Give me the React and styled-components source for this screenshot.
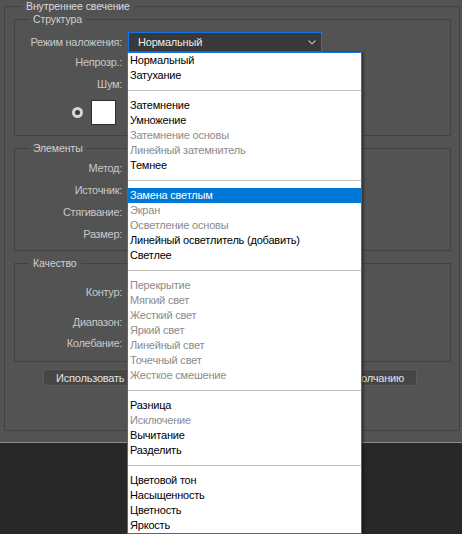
import React from 'react'
import styled, { createGlobalStyle } from 'styled-components'

const GlobalStyle = createGlobalStyle`
  html, body {
    margin: 0;
    padding: 0;
    background: #282828;
  }
  body {
    font-family: "Liberation Sans", Arial, sans-serif;
    font-size: 11px;
  }
`;

const blendGroups = [
  [['Нормальный'], ['Затухание']],
  [['Затемнение'], ['Умножение'], ['Затемнение основы', 'off'], ['Линейный затемнитель', 'off'], ['Темнее']],
  [['Замена светлым', 'sel'], ['Экран', 'off'], ['Осветление основы', 'off'], ['Линейный осветлитель (добавить)'], ['Светлее']],
  [['Перекрытие', 'off'], ['Мягкий свет', 'off'], ['Жесткий свет', 'off'], ['Яркий свет', 'off'], ['Линейный свет', 'off'], ['Точечный свет', 'off'], ['Жесткое смешение', 'off']],
  [['Разница'], ['Исключение', 'off'], ['Вычитание'], ['Разделить']],
  [['Цветовой тон'], ['Насыщенность'], ['Цветность'], ['Яркость']],
];

const App = () => {
  return (
    <Page>
      <GlobalStyle />
      <Panel>
        <Group $outer>
          <Legend $outer>Внутреннее свечение</Legend>

          <Group $top={1}>
            <Legend>Структура</Legend>
            <Rows $pt={7} $pb={10}>
              <Row $h={20}>
                <Label>Режим наложения:</Label>
                <SelectWrap>
                  <Select>
                    <span>Нормальный</span>
                    <svg width="8" height="5" viewBox="0 0 8 5">
                      <path d="M0.5 0.5 L4 4 L7.5 0.5" fill="none" stroke="#b4b4b4" strokeWidth="1.2" />
                    </svg>
                  </Select>
                  <Menu>
                    {blendGroups.map((group, gi) => (
                      <React.Fragment key={gi}>
                        {gi > 0 && <Separator />}
                        {group.map(([name, state]) => (
                          <MenuItem key={name} $off={state === 'off'} $sel={state === 'sel'}>
                            {name}
                          </MenuItem>
                        ))}
                      </React.Fragment>
                    ))}
                  </Menu>
                </SelectWrap>
              </Row>
              <Row $h={20}>
                <Label>Непрозр.:</Label>
              </Row>
              <Row $h={24}>
                <Label>Шум:</Label>
              </Row>
              <SwatchRow>
                <Radio />
                <Swatch />
              </SwatchRow>
            </Rows>
          </Group>

          <Group $top={6}>
            <Legend>Элементы</Legend>
            <Rows $pt={3} $pb={5}>
              <Row $h={22}><Label>Метод:</Label></Row>
              <Row $h={22}><Label>Источник:</Label></Row>
              <Row $h={22}><Label>Стягивание:</Label></Row>
              <Row $h={22}><Label>Размер:</Label></Row>
            </Rows>
          </Group>

          <Group $top={6}>
            <Legend>Качество</Legend>
            <Rows $pt={3} $pb={7}>
              <Row $h={40}><Label>Контур:</Label></Row>
              <Row $h={20}><Label>Диапазон:</Label></Row>
              <Row $h={22}><Label>Колебание:</Label></Row>
            </Rows>
          </Group>

          <Buttons>
            <Button $w={186}>Использовать по умолчанию</Button>
            <Button $w={182} $right>Восстановить по умолчанию</Button>
          </Buttons>
        </Group>
      </Panel>
      <Bottom />
    </Page>
  )
}

const Page = styled.div`
  width: 462px;
  height: 534px;
  display: flex;
  flex-direction: column;
  overflow: hidden;
`;

const Panel = styled.div`
  height: 443px;
  flex-shrink: 0;
  background: #535353;
  padding: 0 2px 0 4px;
  box-sizing: border-box;
  border-bottom: 1px solid #8c8c8c;
`;

const Bottom = styled.div`
  flex: 1;
  background: #282828;
`;

const Group = styled.fieldset`
  margin: ${p => (p.$outer ? '0' : `${p.$top}px 8px 0 9px`)};
  padding: ${p => (p.$outer ? '0 0 43px' : '0')};
  border: 1px solid #424242;
  min-width: 0;
  ${p => p.$outer && 'height: 431px; box-sizing: border-box;'}
`;

const Legend = styled.legend`
  margin-left: ${p => (p.$outer ? '17px' : '14px')};
  padding: 0 4px;
  line-height: 12px;
  font-size: 10.5px;
  letter-spacing: -0.1px;
  color: ${p => (p.$outer ? '#dadada' : '#d0d0d0')};
`;

const Rows = styled.div`
  display: flex;
  flex-direction: column;
  padding-top: ${p => p.$pt}px;
  padding-bottom: ${p => p.$pb}px;
`;

const Row = styled.div`
  display: flex;
  align-items: center;
  gap: 6px;
  height: ${p => p.$h}px;
`;

const Label = styled.div`
  width: 107px;
  text-align: right;
  color: #c8c8c8;
  letter-spacing: -0.3px;
  white-space: nowrap;
  flex-shrink: 0;
`;

const SelectWrap = styled.div`
  position: relative;
  width: 194px;
  height: 20px;
`;

const Select = styled.div`
  height: 100%;
  box-sizing: border-box;
  background: #393939;
  border: 1px solid #1473e6;
  display: flex;
  align-items: center;
  justify-content: space-between;
  padding: 0 5px 0 9px;
  color: #ececec;
  letter-spacing: -0.2px;
`;

const Menu = styled.div`
  position: absolute;
  top: 20px;
  left: -1px;
  width: 235px;
  box-sizing: border-box;
  background: #fff;
  border: 1px solid #1473e6;
  box-shadow: 2px 0 2px rgba(0, 0, 0, 0.35);
  z-index: 5;
`;

const MenuItem = styled.div`
  height: 15px;
  line-height: 15px;
  padding-left: 2px;
  white-space: nowrap;
  letter-spacing: -0.2px;
  color: ${p => (p.$sel ? '#fff' : p.$off ? '#8b8b8b' : '#000')};
  background: ${p => (p.$sel ? '#0078d7' : 'transparent')};
`;

const Separator = styled.div`
  height: 15px;
  display: flex;
  align-items: center;
  &::after {
    content: '';
    flex: 1;
    height: 1px;
    background: #c3c3c3;
  }
`;

const SwatchRow = styled.div`
  display: flex;
  align-items: center;
  gap: 8px;
  padding: 4px 0 0 57px;
`;

const Radio = styled.div`
  width: 11px;
  height: 11px;
  border-radius: 50%;
  background: #d6d6d6;
  display: flex;
  align-items: center;
  justify-content: center;
  &::after {
    content: '';
    width: 5px;
    height: 5px;
    border-radius: 50%;
    background: #3a3a3a;
  }
`;

const Swatch = styled.div`
  width: 23px;
  height: 23px;
  background: #fff;
  border: 1px solid #2e2e2e;
`;

const Buttons = styled.div`
  display: flex;
  gap: 6px;
  margin: 7px 0 0 38px;
`;

const Button = styled.button`
  width: ${p => p.$w}px;
  height: 17px;
  padding: 0 ${p => (p.$right ? '12px' : '0')} 0 ${p => (p.$right ? '0' : '12px')};
  text-align: ${p => (p.$right ? 'right' : 'left')};
  background: #464646;
  border: 1px solid #5c5c5c;
  border-radius: 3px;
  color: #e2e2e2;
  font-family: inherit;
  font-size: 11px;
  letter-spacing: -0.2px;
  white-space: nowrap;
  overflow: hidden;
`;

export default App
